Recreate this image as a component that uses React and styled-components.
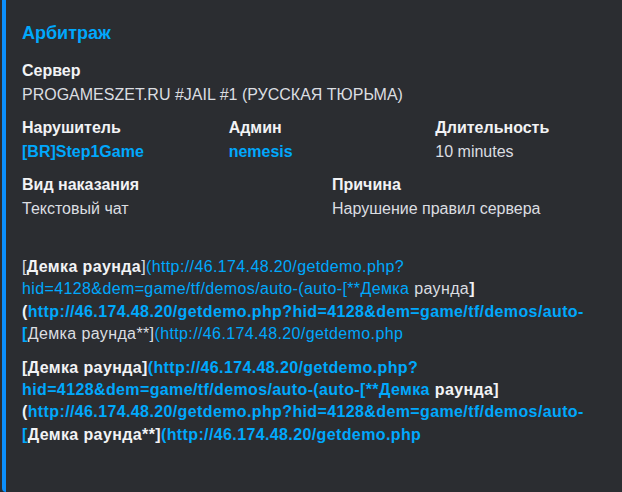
import React from "react";
import styled, { createGlobalStyle } from "styled-components";

const Global = createGlobalStyle`
  html, body { margin: 0; padding: 0; background: #2b2d31; overflow: hidden; }
  body { font-family: "Liberation Sans", Arial, sans-serif; }
`;

const Embed = styled.article`
  box-sizing: border-box;
  width: 660px;
  height: 492px;
  margin-left: 2px;
  background: #2b2d31;
  border-left: 4px solid #0c8ffc;
  border-bottom-left-radius: 4px;
  padding: 22px 16px 0 16px;
  display: flex;
  flex-direction: column;
  gap: 16px;
`;

const Title = styled.div`
  color: #00a8fc;
  font-size: 18px;
  font-weight: 700;
  line-height: 22px;
`;

const Fields = styled.div`
  display: grid;
  grid-template-columns: repeat(12, 1fr);
  column-gap: 8px;
  row-gap: 11px;
  width: 612px;
`;

const Field = styled.div`
  grid-column: span ${(p) => p.$span};
  display: flex;
  flex-direction: column;
  gap: 2px;
  min-width: 0;
`;

const Name = styled.div`
  color: #f2f3f5;
  font-size: 16px;
  font-weight: 700;
  line-height: 22px;
  min-height: 22px;
`;

const Value = styled.div`
  color: #dbdee1;
  font-size: 16px;
  line-height: 22px;
`;

const Description = styled.div`
  color: #dbdee1;
  font-size: 16px;
  line-height: 22.4px;
  letter-spacing: 0.38px;
  padding-top: 1px;
`;

const Link = styled.span`
  color: #00a8fc;
  font-weight: ${(p) => (p.$bold ? 700 : "inherit")};
`;

const Strong = styled.span`
  color: #f2f3f5;
  font-weight: 700;
`;

const Para = styled.div`
  margin-top: ${(p) => p.$gap || 0}px;
`;

const Line = styled.div`
  white-space: nowrap;
`;

export default function App() {
  return (
    <>
      <Global />
      <Embed>
        <Title>Арбитраж</Title>
        <Fields>
          <Field $span={12}>
            <Name>Сервер</Name>
            <Value>PROGAMESZET.RU #JAIL #1 (РУССКАЯ ТЮРЬМА)</Value>
          </Field>
          <Field $span={4}>
            <Name>Нарушитель</Name>
            <Value><Link $bold>[BR]Step1Game</Link></Value>
          </Field>
          <Field $span={4}>
            <Name>Админ</Name>
            <Value><Link $bold>nemesis</Link></Value>
          </Field>
          <Field $span={4}>
            <Name>Длительность</Name>
            <Value>10 minutes</Value>
          </Field>
          <Field $span={6}>
            <Name>Вид наказания</Name>
            <Value>Текстовый чат</Value>
          </Field>
          <Field $span={6}>
            <Name>Причина</Name>
            <Value>Нарушение правил сервера</Value>
          </Field>
          <Field $span={12}>
            <Name aria-hidden="true">&nbsp;</Name>
            <Description>
              <Para>
                <Line>
                  [<Strong>Демка раунда</Strong>]<Link>(http://46.174.48.20/getdemo.php?</Link>
                </Line>
                <Line>
                  <Link>hid=4128&amp;dem=game/tf/demos/auto-(auto-[**Демка</Link> раунда<Strong>]</Strong>
                </Line>
                <Line>
                  <Strong>(</Strong><Link $bold>http://46.174.48.20/getdemo.php?hid=4128&amp;dem=game/tf/demos/auto-</Link>
                </Line>
                <Line>
                  <Link $bold>[</Link>Демка раунда**]<Link>(http://46.174.48.20/getdemo.php</Link>
                </Line>
              </Para>
              <Para $gap={11}>
                <Line>
                  <Strong>[Демка раунда]</Strong><Link $bold>(http://46.174.48.20/getdemo.php?</Link>
                </Line>
                <Line>
                  <Link $bold>hid=4128&amp;dem=game/tf/demos/auto-(auto-[**Демка</Link><Strong> раунда]</Strong>
                </Line>
                <Line>
                  <Strong>(</Strong><Link $bold>http://46.174.48.20/getdemo.php?hid=4128&amp;dem=game/tf/demos/auto-</Link>
                </Line>
                <Line>
                  <Link $bold>[</Link><Strong>Демка раунда**]</Strong><Link $bold>(http://46.174.48.20/getdemo.php</Link>
                </Line>
              </Para>
            </Description>
          </Field>
        </Fields>
      </Embed>
    </>
  );
}
